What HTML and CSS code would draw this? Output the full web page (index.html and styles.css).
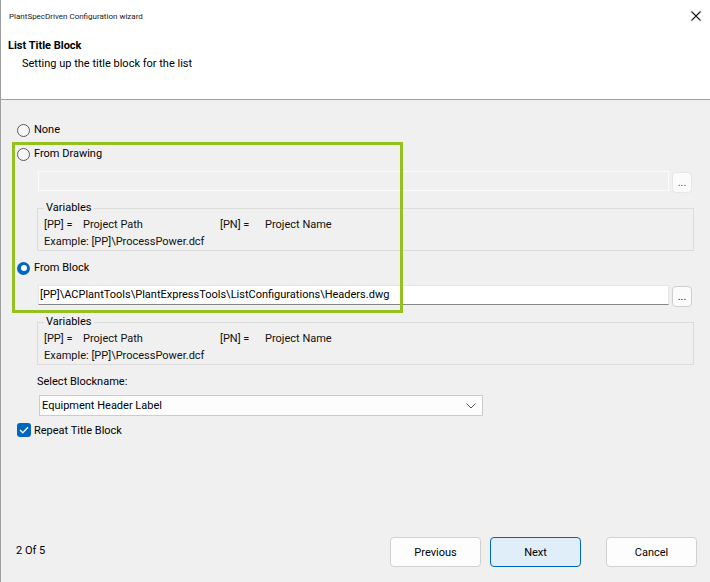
FILE: index.html
```html
<!DOCTYPE html>
<html lang="en">
<head>
<meta charset="utf-8">
<title>PlantSpecDriven Configuration wizard</title>
<link rel="stylesheet" href="styles.css">
</head>
<body>
<div class="window">
  <header class="header">
    <div class="titlebar">
      <span class="app-title">PlantSpecDriven Configuration wizard</span>
      <svg class="close" width="10" height="10" viewBox="0 0 10 10" aria-label="Close">
        <path d="M0.5 0.5 L9.5 9.5 M9.5 0.5 L0.5 9.5" stroke="#1a1a1a" stroke-width="1.1" fill="none"/>
      </svg>
    </div>
    <h1 class="page-title">List Title Block</h1>
    <p class="page-sub">Setting up the title block for the list</p>
  </header>

  <main class="content">
    <label class="radio-row"><span class="radio"></span>None</label>
    <label class="radio-row gap-5"><span class="radio"></span>From Drawing</label>
    <div class="path-row">
      <div class="textbox disabled"></div>
      <button class="browse disabled" type="button">...</button>
    </div>
    <fieldset class="vars">
      <legend>Variables</legend>
      <div class="vars-grid">
        <span>[PP] =</span><span>Project Path</span><span>[PN] =</span><span>Project Name</span>
        <span class="span-all">Example: [PP]\ProcessPower.dcf</span>
      </div>
    </fieldset>

    <label class="radio-row gap-7"><span class="radio checked"></span>From Block</label>
    <div class="path-row">
      <div class="textbox">[PP]\ACPlantTools\PlantExpressTools\ListConfigurations\Headers.dwg</div>
      <button class="browse" type="button">...</button>
    </div>
    <fieldset class="vars">
      <legend>Variables</legend>
      <div class="vars-grid">
        <span>[PP] =</span><span>Project Path</span><span>[PN] =</span><span>Project Name</span>
        <span class="span-all">Example: [PP]\ProcessPower.dcf</span>
      </div>
    </fieldset>

    <div class="field-label">Select Blockname:</div>
    <div class="combo">
      <span>Equipment Header Label</span>
      <svg width="10" height="6" viewBox="0 0 10 6"><path d="M0.5 0.5 L5 5 L9.5 0.5" stroke="#555" stroke-width="1" fill="none"/></svg>
    </div>

    <label class="check-row">
      <span class="checkbox"><svg width="10" height="8" viewBox="0 0 10 8"><path d="M1 4 L3.8 6.8 L9 1.2" stroke="#fff" stroke-width="1.3" fill="none"/></svg></span>
      Repeat Title Block
    </label>
  </main>

  <footer class="footer">
    <span class="page-count">2 Of 5</span>
    <button class="btn" type="button">Previous</button>
    <button class="btn primary" type="button">Next</button>
    <button class="btn cancel" type="button">Cancel</button>
  </footer>

  <div class="highlight"></div>
</div>
</body>
</html>
```

FILE: styles.css
```css
* { box-sizing: border-box; }
html, body { margin: 0; padding: 0; }
body {
  width: 710px;
  height: 582px;
  overflow: hidden;
  font-family: Roboto, "Noto Sans", "Liberation Sans", sans-serif;
  font-size: 11px;
  color: #000;
  background: #f0f0f0;
}
.window {
  position: relative;
  width: 710px;
  height: 582px;
  display: flex;
  flex-direction: column;
  background: #f0f0f0;
  border-left: 1px solid #9c9c9c;
}
.header {
  height: 100px;
  background: #fff;
  border-bottom: 1px solid #a0a0a0;
  flex: none;
}
.titlebar {
  height: 32px;
  display: flex;
  align-items: center;
  justify-content: space-between;
  padding: 0 9px 0 8px;
}
.app-title {
  font-size: 8px;
  color: #1a1a1a;
}
.page-title {
  margin: 6px 0 0 7px;
  font-size: 11px;
  line-height: 16px;
  font-weight: bold;
}
.page-sub {
  margin: 2px 0 0 21px;
  font-size: 11px;
  line-height: 16px;
}
.content {
  flex: 1;
  display: flex;
  flex-direction: column;
  padding: 20px 16px 0 15px;
}
.radio-row {
  display: flex;
  align-items: center;
  height: 20px;
  line-height: 20px;
}
.gap-5 { margin-top: 4px; }
.gap-7 { margin-top: 7px; }
.radio {
  width: 13px;
  height: 13px;
  border-radius: 50%;
  border: 1px solid #5a5a5a;
  background: #f7f7f7;
  margin: 0 4px 0 1px;
  flex: none;
}
.radio.checked {
  border: none;
  background: #0067c0;
  display: flex;
  align-items: center;
  justify-content: center;
}
.radio.checked::after {
  content: "";
  width: 6px;
  height: 6px;
  border-radius: 50%;
  background: #fff;
}
.path-row {
  display: flex;
  align-items: flex-start;
  gap: 3px;
  margin: 7px 2px 0 22px;
}
.textbox {
  flex: 1;
  height: 20px;
  line-height: 18px;
  padding: 0 1px;
  background: #fff;
  border: 1px solid #e6e6e6;
  border-bottom-color: #868686;
  white-space: nowrap;
  overflow: hidden;
}
.textbox.disabled {
  background: #f0f0f0;
  border: 1px solid #fbfbfb;
}
.browse {
  width: 20px;
  height: 21px;
  margin-top: 1px;
  padding: 0 0 3px;
  border: 1px solid #cfcfcf;
  border-radius: 4px;
  background: #fbfbfb;
  font: inherit;
  font-size: 11px;
  line-height: 12px;
  display: flex;
  align-items: flex-end;
  justify-content: center;
  color: #222;
}
.browse.disabled {
  border-color: #e6e6e6;
  color: #555;
}
.vars {
  margin: 8px 0 0 21px;
  padding: 1px 6px 0 6px;
  border: 1px solid #dcdcdc;
  min-width: 0;
}
.vars legend {
  padding: 0 2px;
  font-size: 11px;
  line-height: 14px;
}
.vars-grid {
  display: grid;
  grid-template-columns: 39px 137px 45px 1fr;
  line-height: 17px;
  white-space: nowrap;
  color: #111;
}
.span-all { grid-column: 1 / -1; }
.field-label {
  margin: 8px 0 0 21px;
  line-height: 17px;
}
.combo {
  margin: 5px 0 0 23px;
  width: 444px;
  height: 21px;
  padding: 0 6px 0 2px;
  display: flex;
  align-items: center;
  justify-content: space-between;
  background: #fdfdfd;
  border: 1px solid #cccccc;
}
.check-row {
  margin-top: 4px;
  height: 20px;
  display: flex;
  align-items: center;
}
.checkbox {
  width: 14px;
  height: 14px;
  margin: 0 3px 0 1px;
  border-radius: 3px;
  background: #0067c0;
  display: flex;
  align-items: center;
  justify-content: center;
  flex: none;
}
.footer {
  flex: none;
  display: flex;
  align-items: center;
  padding: 0 13px 15px 15px;
}
.page-count {
  flex: 1;
  padding-bottom: 4px;
}
.btn {
  width: 91px;
  height: 30px;
  margin-left: 9px;
  border: 1px solid #d0d0d0;
  border-radius: 4px;
  background: #fdfdfd;
  font: inherit;
  font-size: 11px;
  color: #000;
}
.btn.primary {
  background: #e0eef9;
  border-color: #0067c0;
}
.btn.cancel { margin-left: 25px; }
.highlight {
  position: absolute;
  left: 11px;
  top: 142px;
  width: 391px;
  height: 171px;
  border: 3px solid #94c11e;
  pointer-events: none;
}
```
